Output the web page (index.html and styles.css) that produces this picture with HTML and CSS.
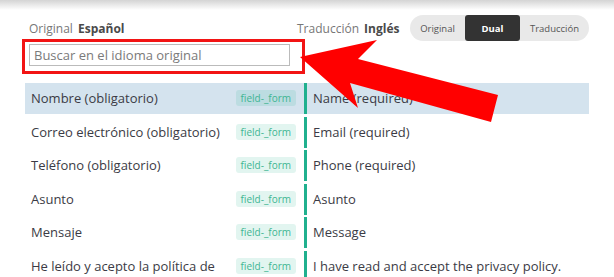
FILE: index.html
```html
<!DOCTYPE html>
<html lang="es">
<head>
  <meta charset="UTF-8" />
  <meta name="viewport" content="width=device-width, initial-scale=1" />
  <title>Traducción de cadenas</title>
  <link rel="stylesheet" href="styles.css">
</head>
<body>
  <div class="shade"></div>

  <div class="main">
    <div class="header">
      <div class="lang lang-left">Original <b>Español</b></div>
      <div class="lang">Traducción <b>Inglés</b></div>
      <div class="toggle">
        <span class="seg seg-orig">Original</span>
        <span class="seg seg-dual active">Dual</span>
        <span class="seg seg-trad">Traducción</span>
      </div>
    </div>

    <div class="search-box">
      <input type="text" class="search" placeholder="Buscar en el idioma original" />
    </div>

    <div class="rows">
      <div class="row selected">
        <div class="cell-src"><span class="txt">Nombre (obligatorio)</span><span class="tag">field-_form</span></div>
        <div class="cell-dst">Name (required)</div>
      </div>
      <div class="row">
        <div class="cell-src"><span class="txt">Correo electrónico (obligatorio)</span><span class="tag">field-_form</span></div>
        <div class="cell-dst">Email (required)</div>
      </div>
      <div class="row">
        <div class="cell-src"><span class="txt">Teléfono (obligatorio)</span><span class="tag">field-_form</span></div>
        <div class="cell-dst">Phone (required)</div>
      </div>
      <div class="row">
        <div class="cell-src"><span class="txt">Asunto</span><span class="tag">field-_form</span></div>
        <div class="cell-dst">Asunto</div>
      </div>
      <div class="row">
        <div class="cell-src"><span class="txt">Mensaje</span><span class="tag">field-_form</span></div>
        <div class="cell-dst">Message</div>
      </div>
      <div class="row">
        <div class="cell-src"><span class="txt">He leído y acepto la política de privacidad.</span><span class="tag">field-_form</span></div>
        <div class="cell-dst">I have read and accept the privacy policy.</div>
      </div>
    </div>
  </div>

  <!-- annotation arrow over the page -->
  <svg class="arrow" width="614" height="277" viewBox="0 0 614 277">
    <polygon points="300,57 377,40 358,59 498,95 491,122 350,83 358,108" fill="#ff0000" />
  </svg>
</body>
</html>
```

FILE: styles.css
```css
body {
  margin: 0;
  font-family: "Open Sans", "Noto Sans", sans-serif;
  color: #3b3b45;
  background: #fff;
}
.shade {
  height: 10px;
  background: linear-gradient(#d4d4d4, #fff);
}
.main {
  padding: 0 25px;
}
.header {
  display: flex;
  align-items: center;
  padding-top: 5px;
  height: 26px;
}
.lang {
  font-size: 12px;
  color: #777;
  padding-top: 1px;
}
.lang b {
  font-weight: 700;
  color: #4a4a4a;
  margin-left: 2px;
}
.lang-left {
  width: 268px;
  padding-left: 4px;
}
.toggle {
  margin-left: auto;
  display: flex;
  height: 26px;
  background: #e9e9e9;
  border-radius: 13px;
  font-size: 9.5px;
  color: #555;
}
.seg {
  display: flex;
  align-items: center;
  justify-content: center;
}
.seg-orig {
  width: 55px;
}
.seg-dual {
  width: 55px;
}
.seg-trad {
  width: 69px;
}
.seg.active {
  background: #333;
  color: #fff;
  font-weight: 700;
  border-radius: 3px;
}
.search-box {
  margin: -2px 0 0 -3px;
  width: 269px;
  height: 27px;
  border: 3px solid #f21414;
  padding: 2px 4px 0 4px;
  box-sizing: content-box;
}
.search {
  display: block;
  box-sizing: border-box;
  width: 261px;
  height: 22px;
  margin: 0;
  border: 1px solid #bbb;
  padding: 0 4px;
  font-family: "Open Sans", "Noto Sans", sans-serif;
  font-size: 13px;
  color: #333;
}
.search::placeholder {
  color: #7a7a7a;
}
.rows {
  margin-top: 9px;
  display: flex;
  flex-direction: column;
  gap: 2.6px;
}
.row {
  display: flex;
  font-size: 13px;
  line-height: 19px;
}
.row.selected {
  background: #d4e3ee;
}
.cell-src {
  width: 279px;
  box-sizing: border-box;
  display: flex;
  align-items: flex-start;
  padding: 6px 8px 6px 6px;
}
.txt {
  flex: 1;
}
.tag {
  margin-top: 1px;
  flex: none;
  font-size: 10px;
  line-height: 16px;
  height: 16px;
  padding: 0 5px;
  border-radius: 3px;
  color: #3fb592;
  background: rgba(32, 176, 142, 0.13);
}
.cell-dst {
  flex: 1;
  border-left: 3px solid #20b08e;
  padding: 6px 6px 6px 6px;
  height: 19px;
}
.arrow {
  position: absolute;
  top: 0;
  left: 0;
  pointer-events: none;
}
```
